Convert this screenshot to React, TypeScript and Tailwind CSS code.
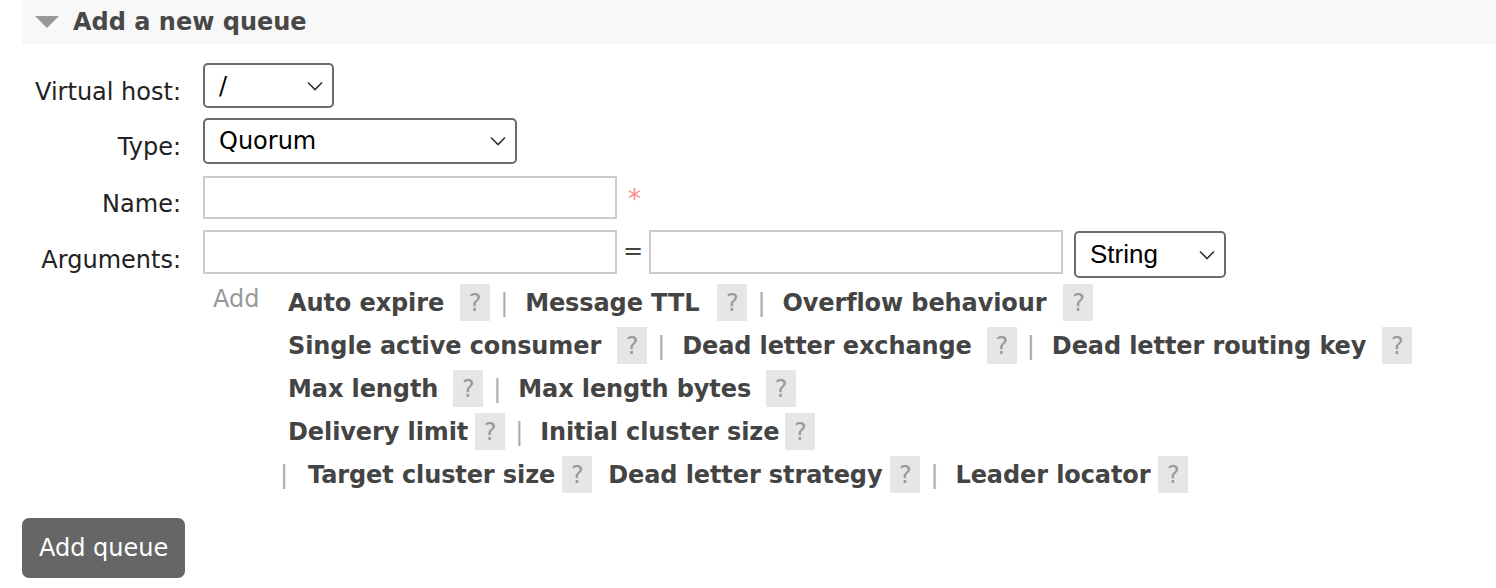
import React from "react";

type Item = { label: string; helpGap: number; sep?: boolean; gapAfter?: number };

const lines: { lead?: boolean; items: Item[] }[] = [
  {
    items: [
      { label: "Auto expire", helpGap: 16, sep: true },
      { label: "Message TTL", helpGap: 18, sep: true },
      { label: "Overflow behaviour", helpGap: 17 },
    ],
  },
  {
    items: [
      { label: "Single active consumer", helpGap: 16, sep: true },
      { label: "Dead letter exchange", helpGap: 15, sep: true },
      { label: "Dead letter routing key", helpGap: 16 },
    ],
  },
  {
    items: [
      { label: "Max length", helpGap: 15, sep: true },
      { label: "Max length bytes", helpGap: 15 },
    ],
  },
  {
    items: [
      { label: "Delivery limit", helpGap: 7, sep: true },
      { label: "Initial cluster size", helpGap: 6 },
    ],
  },
  {
    lead: true,
    items: [
      { label: "Target cluster size", helpGap: 7, gapAfter: 16 },
      { label: "Dead letter strategy", helpGap: 8, sep: true },
      { label: "Leader locator", helpGap: 8 },
    ],
  },
];

const Chevron = () => (
  <svg width="16" height="10" viewBox="0 0 16 10" className="shrink-0">
    <path d="M1 1.5 L8 8.5 L15 1.5" fill="none" stroke="#333" strokeWidth="1.6" />
  </svg>
);

const Select = ({
  value,
  width,
  height,
  font,
}: {
  value: string;
  width: string;
  height: string;
  font: string;
}) => (
  <div
    className={`flex items-center justify-between border-2 border-[#6b6b6b] rounded-[5px] bg-white pl-[14px] pr-[9px] text-black ${width} ${height} ${font}`}
  >
    <span>{value}</span>
    <Chevron />
  </div>
);

const Help = ({ ml }: { ml: number }) => (
  <span
    className="inline-flex items-center justify-center w-[30px] h-[37px] bg-[#e6e6e6] text-[#999] font-normal text-[24px]"
    style={{ marginLeft: ml }}
  >
    ?
  </span>
);

const Sep = () => (
  <span className="ml-[10px] mr-[17px] text-[#aaa] font-normal text-[24px]">|</span>
);

export default function App() {
  return (
    <div className="w-[1496px] h-[588px] bg-white pl-[22px] font-['DejaVu_Sans',Verdana,sans-serif] text-[24px] text-[#484848] overflow-hidden">
      <div className="flex items-center h-[44px] bg-[#f8f8f8]">
        <svg width="24" height="12" viewBox="0 0 24 12" className="ml-[13px]">
          <path d="M0 0 H24 L12 12 Z" fill="#999" />
        </svg>
        <h2 className="ml-[14px] font-bold text-[24px] text-[#484848] leading-none">
          Add a new queue
        </h2>
      </div>

      <div className="mt-[19px] flex flex-col">
        <div className="flex items-start h-[45px]">
          <div className="w-[159px] text-right pt-[15px] text-[#222] leading-[28px]">Virtual host:</div>
          <div className="ml-[22px]">
            <Select value="/" width="w-[131px]" height="h-[45px]" font="text-[24px]" />
          </div>
        </div>

        <div className="flex items-start h-[46px] mt-[10px]">
          <div className="w-[159px] text-right pt-[15px] text-[#222] leading-[28px]">Type:</div>
          <div className="ml-[22px]">
            <Select value="Quorum" width="w-[314px]" height="h-[46px]" font="text-[24px]" />
          </div>
        </div>

        <div className="flex items-start h-[43px] mt-[12px]">
          <div className="w-[159px] text-right pt-[14px] text-[#222] leading-[28px]">Name:</div>
          <div className="ml-[22px] flex items-start">
            <input className="w-[414px] h-[43px] border-2 border-[#ccc] outline-none" />
            <span className="ml-[11px] mt-[9px] text-[#ff8a8a] text-[26px] leading-[28px]">*</span>
          </div>
        </div>

        <div className="flex items-start h-[48px] mt-[11px]">
          <div className="w-[159px] text-right pt-[16px] text-[#222] leading-[28px]">Arguments:</div>
          <div className="ml-[22px] flex items-start">
            <input className="w-[414px] h-[44px] border-2 border-[#ccc] outline-none" />
            <span className="w-[32px] text-center mt-[7px] text-[#444] leading-[28px]">=</span>
            <input className="w-[414px] h-[44px] border-2 border-[#ccc] outline-none" />
            <div className="ml-[11px] mt-[1px]">
              <Select
                value="String"
                width="w-[152px]"
                height="h-[47px]"
                font="text-[26px] font-['Liberation_Sans',Arial,sans-serif]"
              />
            </div>
          </div>
        </div>

        <div className="flex items-start mt-[3px] ml-[181px]">
          <div className="w-[85px] pl-[10px] pt-[4px] text-[#999] leading-[28px]">Add</div>
          <div className="flex flex-col">
            {lines.map((line, i) => (
              <div key={i} className="flex items-center h-[43px] font-bold text-[#444] tracking-[-0.1px]">
                {line.lead && (
                  <span className="-ml-[8px] mr-[20px] text-[#aaa] font-normal">|</span>
                )}
                {line.items.map((it) => (
                  <React.Fragment key={it.label}>
                    <span className="whitespace-nowrap">{it.label}</span>
                    <Help ml={it.helpGap} />
                    {it.sep && <Sep />}
                    {it.gapAfter && <span style={{ width: it.gapAfter }} />}
                  </React.Fragment>
                ))}
              </div>
            ))}
          </div>
        </div>

        <div className="mt-[22px]">
          <button className="h-[60px] px-[17px] rounded-[7px] bg-[#666] text-white text-[24px]">
            Add queue
          </button>
        </div>
      </div>
    </div>
  );
}
